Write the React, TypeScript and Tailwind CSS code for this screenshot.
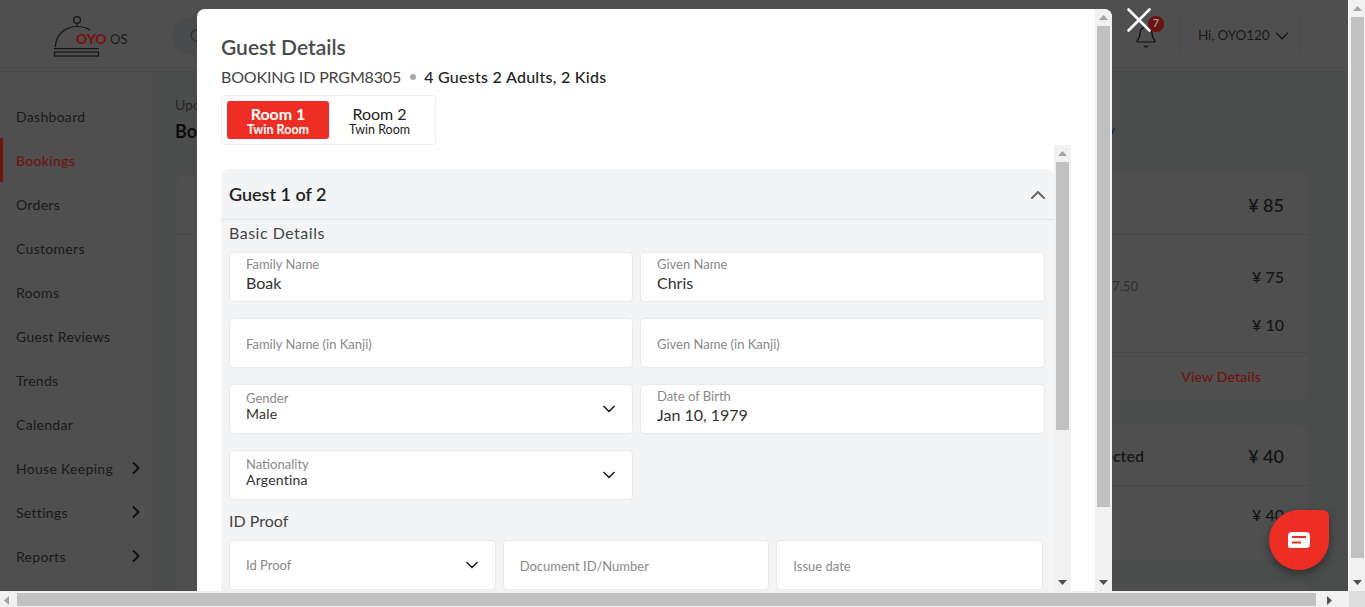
import { ChevronDown, ChevronRight, ChevronUp, Bell, Search, X } from 'lucide-react';

const menu = ['Dashboard', 'Bookings', 'Orders', 'Customers', 'Rooms', 'Guest Reviews', 'Trends', 'Calendar', 'House Keeping', 'Settings', 'Reports'];
const withArrow = ['House Keeping', 'Settings', 'Reports'];

function Arrow({ dir }: { dir: 'up' | 'down' | 'left' | 'right' }) {
  const points = { up: '0,5 4.5,0 9,5', down: '0,0 4.5,5 9,0', left: '5,0 0,4.5 5,9', right: '0,0 5,4.5 0,9' }[dir];
  return (
    <svg width="9" height="9" viewBox="0 0 9 9" className="block">
      <polygon points={points} fill={dir === 'down' || dir === 'right' ? '#505050' : '#a3a3a3'} />
    </svg>
  );
}

function VScroll({ thumb }: { thumb: number }) {
  return (
    <div className="h-full w-full bg-[#f1f1f1] flex flex-col items-center">
      <div className="h-[17px] shrink-0 flex items-center justify-center pt-1"><Arrow dir="up" /></div>
      <div className="flex-1 min-h-0 w-[13px]">
        <div className="w-full bg-[#c1c1c1]" style={{ height: thumb }} />
      </div>
      <div className="h-[17px] shrink-0 flex items-center justify-center pt-1"><Arrow dir="down" /></div>
    </div>
  );
}

function Field({ label, value, select }: { label: string; value?: string; select?: boolean }) {
  return (
    <div className="relative flex-1 min-w-0 h-[50px] bg-white border border-[#e9eaec] rounded-[4px] pl-[16px] flex flex-col justify-center">
      {select && value && (
        <>
          <div className="text-[13px] leading-[16px] text-[#8a8a8a] -mt-[6px]">{label}</div>
          <div className="text-[14px] leading-[16px] text-[#333] tracking-[0.2px]">{value}</div>
        </>
      )}
      {select && !value && <div className="text-[13px] leading-[16px] text-[#8a8a8a]">{label}</div>}
      {!select && value && (
        <>
          <div className="text-[13px] leading-[16px] text-[#8a8a8a] -mt-[4px]">{label}</div>
          <div className="text-[16px] leading-[22px] text-[#333]">{value}</div>
        </>
      )}
      {!select && !value && <div className="text-[13px] leading-[16px] text-[#8a8a8a] pt-[1px]">{label}</div>}
      {select && <ChevronDown size={20} strokeWidth={2} className="absolute right-[13px] top-[14px] text-[#222]" />}
    </div>
  );
}

function Logo() {
  return (
    <svg width="84" height="46" viewBox="0 0 84 46" className="block">
      <circle cx="24" cy="5" r="3.4" fill="none" stroke="#151515" strokeWidth="1.2" />
      <path d="M24 8.500v3M2.500 32C2.500 20 12 11.500 24 11.500C30 11.500 34 13 37 15" fill="none" stroke="#151515" strokeWidth="1.2" />
      <rect x="1" y="33" width="45" height="1.200" fill="#151515" />
      <rect x="1.500" y="37" width="44" height="4" fill="none" stroke="#151515" strokeWidth="1.200" />
      <text x="23" y="29" fontSize="14" fontWeight="900" fill="#7a1210" fontFamily="Lato, sans-serif">OYO</text>
      <text x="57" y="29" fontSize="13" fill="#1a1a1a" fontFamily="Lato, sans-serif">OS</text>
    </svg>
  );
}

export default function App() {
  return (
    <div className="relative h-screen w-full overflow-hidden flex flex-col bg-[#f1f1f1] text-[#151515] font-['Lato','Open_Sans',sans-serif]">
      <div className="flex-1 min-h-0 flex">
        {/* dimmed page behind the modal */}
        <div className="flex-1 min-w-0 bg-[#4b4c4c] flex flex-col overflow-hidden">
          <header className="h-[72px] shrink-0 bg-[#4f4f4f] border-b border-[#484848] flex items-center">
            <div className="w-[172px] pl-[53px] pt-[4px]"><Logo /></div>
            <div className="w-[400px] h-[38px] rounded-full bg-[#4a4b4c] pl-[17px] flex items-center text-[#333]">
              <Search size={16} strokeWidth={2} />
            </div>
            <div className="ml-auto flex items-center h-[35px]">
              <div className="relative mr-[21px] translate-y-[1px]">
                <Bell size={24} strokeWidth={1.2} className="text-[#0d0d0d]" />
                <div className="absolute -top-[9px] left-[14px] w-4 h-4 rounded-full bg-[#6f1010] text-[#999] text-[11px] font-bold flex items-center justify-center">7</div>
              </div>
              <div className="h-full border-x border-[#484848] w-[122px] pl-[18px] flex items-center gap-[2px] text-[13.500px] tracking-[-0.1px] text-[#1a1a1a] whitespace-nowrap">
                <span>Hi, OYO120</span>
                <ChevronDown size={22} strokeWidth={1.6} />
              </div>
              <div className="w-[47px]" />
            </div>
          </header>
          <div className="flex-1 min-h-0 flex">
            <nav className="w-[154px] shrink-0 bg-[#4f4f4f] border-r border-[#4a4a4a] pt-[22px]">
              {menu.map((m) => (
                <div key={m} className={`h-[44px] flex items-center text-[14px] tracking-[0.3px] ${m === 'Bookings' ? 'border-l-[3px] border-[#70140f] pl-[13px] text-[#70140f] font-medium' : 'pl-[16px] text-[#1a1a1a]'}`}>
                  <span className="w-[110px]">{m}</span>
                  {withArrow.includes(m) && <ChevronRight size={20} strokeWidth={2.4} className="text-[#111]" />}
                </div>
              ))}
            </nav>
            <main className="flex-1 min-w-0 flex pl-[21px]">
              <div className="w-[800px] shrink-0 pt-[24px]">
                <div className="text-[14px] text-[#262626] leading-[18px]">Upcoming</div>
                <div className="text-[18px] font-bold text-[#0d0d0d] leading-[26px] mt-[4px]">Bookings</div>
                <div className="mt-[30px] h-[440px] bg-[#4f4f4f] border border-[#4a4a4a] rounded-lg">
                  <div className="h-[60px] border-b border-[#474747]" />
                </div>
              </div>
              <div className="w-[316px] ml-[17px] shrink-0 pt-[48px]">
                <div className="-ml-[20px] text-[16px] text-right pr-[193px] leading-[20px] text-[#101e3a] whitespace-nowrap">Payment Summary</div>
                <section className="mt-[33px] h-[227px] bg-[#4f4f4f] rounded-lg">
                  <div className="h-[62px] px-[24px] pt-[4px] flex items-center justify-between border-b border-[#474747] font-semibold text-[18px]">
                    <span>Total</span><span>¥ 85</span>
                  </div>
                  <div className="h-[118px] px-[24px] border-b border-[#474747] pt-[30px] text-[16px] font-medium">
                    <div className="flex justify-between">
                      <div>
                        <div className="h-[13px] leading-[13px]">Rooms</div>
                        <div className="text-[13px] leading-[16px] font-normal text-[#2f2f2f] text-right w-[122px]">Incl. Tax ¥ 7.50</div>
                      </div>
                      <span className="leading-[24px]">¥ 75</span>
                    </div>
                    <div className="flex justify-between mt-[19px] leading-[24px]"><span>Tax</span><span>¥ 10</span></div>
                  </div>
                  <div className="h-[47px] flex items-center justify-end pr-[47px] text-[14px] tracking-[0.2px] font-medium text-[#70140f]">View Details</div>
                </section>
                <section className="mt-[25px] h-[135px] bg-[#4f4f4f] rounded-lg">
                  <div className="h-[61px] px-[24px] pt-[2px] flex items-center justify-between border-b border-[#474747] font-semibold text-[16px]">
                    <span>Amount Collected</span><span className="text-[18px]">¥ 40</span>
                  </div>
                  <div className="h-[58px] px-[24px] flex items-center justify-end text-[16px] font-medium">¥ 40</div>
                </section>
                <section className="mt-[23px] h-[60px] bg-[#4f4f4f] rounded-lg" />
              </div>
            </main>
          </div>
        </div>
        <div className="w-[17px] shrink-0 pl-[1px] bg-white"><VScroll thumb={541} /></div>
      </div>

      {/* bottom scrollbar */}
      <div className="h-[16px] shrink-0 flex bg-[#f1f1f1] pt-[2px]">
        <div className="w-[17px] flex items-center justify-center"><Arrow dir="left" /></div>
        <div className="w-[1299px] h-[13px] bg-[#c1c1c1]" />
        <div className="flex-1 flex items-center justify-center pr-[2px]"><Arrow dir="right" /></div>
        <div className="w-[16px] -mt-[2px] bg-[#dcdcdc]" />
      </div>

      {/* modal */}
      <div className="absolute left-[197px] top-[9px] w-[915px] h-[582px] bg-white rounded-t-[8px] flex overflow-hidden">
        <div className="flex-1 min-w-0 flex flex-col pl-[24px] pr-[24px] pt-[26px]">
          <h2 className="text-[21px] leading-[24px] font-semibold text-[#4a4a4a]">Guest Details</h2>
          <div className="mt-[6px] h-[24px] flex items-center text-[16px] text-[#444]">
            <span className="tracking-[-0.15px]">BOOKING ID PRGM8305</span>
            <span className="w-[6px] h-[6px] rounded-full bg-[#a8a8a8] ml-[9px] mr-[8px]" />
            <span className="font-medium text-[#222] tracking-[0.27px]">4 Guests 2 Adults, 2 Kids</span>
          </div>
          <div className="mt-[6px] w-[215px] h-[50px] shrink-0 border border-[#eeeeee] rounded-[4px] p-[5px] flex">
            <div className="w-[102px] bg-[#ee2e24] rounded-[3px] text-white text-center flex flex-col justify-center font-bold">
              <div className="text-[16px] leading-[17px]">Room 1</div>
              <div className="text-[12.500px] leading-[13px] pt-[1px]">Twin Room</div>
            </div>
            <div className="flex-1 text-[#222] text-center flex flex-col justify-center">
              <div className="text-[16px] leading-[17px]">Room 2</div>
              <div className="text-[12.500px] leading-[13px] pt-[1px]">Twin Room</div>
            </div>
          </div>
          <div className="flex-1 min-h-0 flex">
            <div className="flex-1 min-w-0 pt-[24px] overflow-hidden">
              <div className="bg-[#f3f4f6] rounded-t-[8px] h-[600px]">
                <div className="h-[51px] pl-[8px] pr-[4px] pt-[1px] border-b border-[#dfe0e2] flex items-center justify-between">
                  <span className="text-[18px] font-semibold text-[#222]">Guest 1 of 2</span>
                  <ChevronUp size={24} strokeWidth={2} className="text-[#666]" />
                </div>
                <div className="px-[8px]">
                  <div className="text-[16px] leading-[20px] text-[#444] mt-[3px] tracking-[0.5px]">Basic Details</div>
                  <div className="mt-[9px] grid grid-cols-[404px_405px] gap-x-[7px] gap-y-[16px]">
                    <Field label="Family Name" value="Boak" />
                    <Field label="Given Name" value="Chris" />
                    <Field label="Family Name (in Kanji)" />
                    <Field label="Given Name (in Kanji)" />
                    <Field label="Gender" value="Male" select />
                    <Field label="Date of Birth" value="Jan 10, 1979" />
                    <Field label="Nationality" value="Argentina" select />
                  </div>
                  <div className="text-[16px] leading-[20px] text-[#444] mt-[11px]">ID Proof</div>
                  <div className="w-[814px] mt-[9px] flex gap-[7px]">
                    <Field label="Id Proof" select />
                    <Field label="Document ID/Number" />
                    <Field label="Issue date" />
                  </div>
                </div>
              </div>
            </div>
            <div className="w-[17px] shrink-0"><VScroll thumb={268} /></div>
          </div>
        </div>
        <div className="w-[17px] shrink-0"><VScroll thumb={481} /></div>
      </div>

      <X size={42} strokeWidth={1.5} className="absolute left-[1118px] top-[-1px] text-white" />

      {/* chat bubble */}
      <div className="absolute left-[1269px] top-[510px] w-[60px] h-[60px] bg-[#ee2e24] rounded-[30px] rounded-tr-[6px] shadow-[0_4px_10px_rgba(0,0,0,0.4)] flex items-center justify-center">
        <svg width="24" height="18" viewBox="0 0 24 18">
          <path d="M5 1h14a4 4 0 0 1 4 4v8a4 4 0 0 1-4 4H3a2 2 0 0 1-2-2V5a4 4 0 0 1 4-4z" fill="#fff" />
          <rect x="5" y="5" width="14" height="2" fill="#ee2e24" />
          <rect x="5" y="10.500" width="9" height="2" fill="#ee2e24" />
        </svg>
      </div>
    </div>
  );
}
